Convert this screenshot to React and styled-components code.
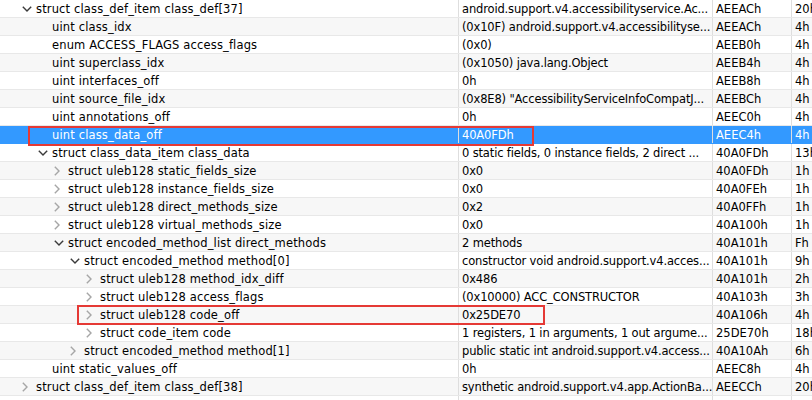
import styled, { createGlobalStyle } from 'styled-components';

const GlobalStyle = createGlobalStyle`
  html, body {
    margin: 0;
    padding: 0;
    background: #ffffff;
    overflow: hidden;
  }
  body {
    font-family: "DejaVu Sans", "Liberation Sans", sans-serif;
    font-size: 11.5px;
    color: #000000;
  }
`;

// level: depth in the tree, open: true / false / undefined (leaf)
const rows = [
    { level: 0, open: true, name: 'struct class_def_item class_def[37]', value: 'android.support.v4.accessibilityservice.Ac...', start: 'AEEACh', size: '20h' },
    { level: 1, name: 'uint class_idx', value: '(0x10F) android.support.v4.accessibilityse...', start: 'AEEACh', size: '4h' },
    { level: 1, name: 'enum ACCESS_FLAGS access_flags', value: '(0x0)', start: 'AEEB0h', size: '4h' },
    { level: 1, name: 'uint superclass_idx', value: '(0x1050) java.lang.Object', start: 'AEEB4h', size: '4h' },
    { level: 1, name: 'uint interfaces_off', value: '0h', start: 'AEEB8h', size: '4h' },
    { level: 1, name: 'uint source_file_idx', value: '(0x8E8) "AccessibilityServiceInfoCompatJ...', start: 'AEEBCh', size: '4h' },
    { level: 1, name: 'uint annotations_off', value: '0h', start: 'AEEC0h', size: '4h' },
    { level: 1, name: 'uint class_data_off', value: '40A0FDh', start: 'AEEC4h', size: '4h', selected: true },
    { level: 1, open: true, name: 'struct class_data_item class_data', value: '0 static fields, 0 instance fields, 2 direct ...', start: '40A0FDh', size: '13h' },
    { level: 2, open: false, name: 'struct uleb128 static_fields_size', value: '0x0', start: '40A0FDh', size: '1h' },
    { level: 2, open: false, name: 'struct uleb128 instance_fields_size', value: '0x0', start: '40A0FEh', size: '1h' },
    { level: 2, open: false, name: 'struct uleb128 direct_methods_size', value: '0x2', start: '40A0FFh', size: '1h' },
    { level: 2, open: false, name: 'struct uleb128 virtual_methods_size', value: '0x0', start: '40A100h', size: '1h' },
    { level: 2, open: true, name: 'struct encoded_method_list direct_methods', value: '2 methods', start: '40A101h', size: 'Fh' },
    { level: 3, open: true, name: 'struct encoded_method method[0]', value: 'constructor void android.support.v4.acces...', start: '40A101h', size: '9h' },
    { level: 4, open: false, name: 'struct uleb128 method_idx_diff', value: '0x486', start: '40A101h', size: '2h' },
    { level: 4, open: false, name: 'struct uleb128 access_flags', value: '(0x10000) ACC_CONSTRUCTOR', start: '40A103h', size: '3h' },
    { level: 4, open: false, name: 'struct uleb128 code_off', value: '0x25DE70', start: '40A106h', size: '4h' },
    { level: 4, open: false, name: 'struct code_item code', value: '1 registers, 1 in arguments, 1 out argume...', start: '25DE70h', size: '18h' },
    { level: 3, open: false, name: 'struct encoded_method method[1]', value: 'public static int android.support.v4.access...', start: '40A10Ah', size: '6h' },
    { level: 1, name: 'uint static_values_off', value: '0h', start: 'AEEC8h', size: '4h' },
    { level: 0, open: false, name: 'struct class_def_item class_def[38]', value: 'synthetic android.support.v4.app.ActionBa...', start: 'AEECCh', size: '20h' },
    { level: 0, name: '', value: '', start: '', size: '' },
];

function Chevron({ open }) {
    if (open) {
        return (
            <svg width="10" height="6" viewBox="0 0 10 6">
                <polyline points="0.8,0.8 5,5 9.2,0.8" fill="none" stroke="#3a3a3a" strokeWidth="1.4" />
            </svg>
        );
    }
    return (
        <svg width="6" height="10" viewBox="0 0 6 10">
            <polyline points="0.8,0.8 5,5 0.8,9.2" fill="none" stroke="#a6a6a6" strokeWidth="1.4" />
        </svg>
    );
}

export default function App() {
    return (
        <>
            <GlobalStyle />
            <Tree>
                {rows.map((row, i) => (
                    <Row key={i} $alt={i % 2 === 1} $selected={row.selected}>
                        <NameCell $level={row.level}>
                            <Toggle>{row.open !== undefined && <Chevron open={row.open} />}</Toggle>
                            {row.name}
                        </NameCell>
                        <Cell $tight>{row.value}</Cell>
                        <Cell>{row.start}</Cell>
                        <Cell $last>{row.size}</Cell>
                    </Row>
                ))}
                <Marker style={{ left: 28, top: 126, width: 506, height: 20 }} />
                <Marker style={{ left: 77, top: 305, width: 468, height: 20 }} />
            </Tree>
        </>
    );
}

const Tree = styled.div`
  position: relative;
  width: 812px;
  height: 400px;
  overflow: hidden;
`;

const Row = styled.div`
  display: grid;
  grid-template-columns: 459px 254px 79px 1fr;
  height: 18px;
  box-sizing: border-box;
  border-bottom: 1px solid ${({ $selected }) => ($selected ? '#3399ff' : '#e8e8e8')};
  background: ${({ $alt, $selected }) => ($selected ? '#3399ff' : $alt ? '#f7f7f7' : '#ffffff')};
  color: ${({ $selected }) => ($selected ? '#ffffff' : '#000000')};
`;

const Cell = styled.div`
  display: flex;
  align-items: center;
  padding-left: 3px;
  white-space: nowrap;
  overflow: hidden;
  letter-spacing: ${({ $tight }) => ($tight ? '-0.15px' : '0')};
  border-right: ${({ $last }) => ($last ? 'none' : '1px solid #dedede')};
`;

const NameCell = styled(Cell)`
  padding-left: ${({ $level }) => 20 + $level * 16}px;
  letter-spacing: 0.15px;
`;

const Toggle = styled.span`
  display: inline-flex;
  align-items: center;
  justify-content: flex-start;
  width: 14px;
  height: 17px;
  padding-left: 2px;
  flex: none;
`;

const Marker = styled.div`
  position: absolute;
  box-sizing: border-box;
  border: 2px solid #e53935;
  pointer-events: none;
`;
